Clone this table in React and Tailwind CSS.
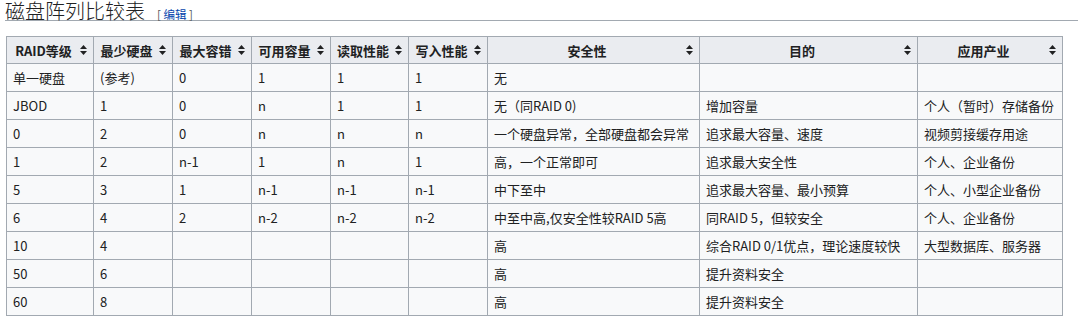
import React from 'react';

const columns = [
  { title: 'RAID等级', width: 'w-[87px]' },
  { title: '最少硬盘', width: 'w-[79px]' },
  { title: '最大容错', width: 'w-[79px]' },
  { title: '可用容量', width: 'w-[79px]' },
  { title: '读取性能', width: 'w-[78px]' },
  { title: '写入性能', width: 'w-[79px]' },
  { title: '安全性', width: 'w-[212px]' },
  { title: '目的', width: 'w-[218px]' },
  { title: '应用产业', width: 'w-[145px]' },
];

const rows = [
  ['单一硬盘', '(参考)', '0', '1', '1', '1', '无', '', ''],
  ['JBOD', '1', '0', 'n', '1', '1', '无（同RAID 0)', '增加容量', '个人（暂时）存储备份'],
  ['0', '2', '0', 'n', 'n', 'n', '一个硬盘异常，全部硬盘都会异常', '追求最大容量、速度', '视频剪接缓存用途'],
  ['1', '2', 'n-1', '1', 'n', '1', '高，一个正常即可', '追求最大安全性', '个人、企业备份'],
  ['5', '3', '1', 'n-1', 'n-1', 'n-1', '中下至中', '追求最大容量、最小预算', '个人、小型企业备份'],
  ['6', '4', '2', 'n-2', 'n-2', 'n-2', '中至中高,仅安全性较RAID 5高', '同RAID 5，但较安全', '个人、企业备份'],
  ['10', '4', '', '', '', '', '高', '综合RAID 0/1优点，理论速度较快', '大型数据库、服务器'],
  ['50', '6', '', '', '', '', '高', '提升资料安全', ''],
  ['60', '8', '', '', '', '', '高', '提升资料安全', ''],
];

function SortIcon() {
  return (
    <svg width="7" height="10" viewBox="0 0 7 10" className="shrink-0 ml-[6px]">
      <polygon points="0,4 3.5,0 7,4" fill="#202122" />
      <polygon points="0,6 3.5,10 7,6" fill="#202122" />
    </svg>
  );
}

export default function App() {
  return (
    <div className="w-[1080px] h-[333px] bg-white overflow-hidden pl-[5px] pr-[2px] font-['Noto_Sans_CJK_SC',sans-serif] text-[#202122]">
      <div className="flex items-baseline border-b border-[#a2a9b1] h-[23px] -mt-[2px]">
        <h2 className="text-[20px] leading-[25px] font-light text-[#202122]">磁盘阵列比较表</h2>
        <span className="ml-[12px] text-[11.5px] text-[#54595d]">
          [ <span className="text-[#0645ad]">编辑</span> ]
        </span>
      </div>

      <table className="mt-[15px] ml-[1px] table-fixed border-collapse text-[13px] leading-[21px] bg-[#f8f9fa]">
        <colgroup>
          {columns.map((c) => (
            <col key={c.title} className={c.width} />
          ))}
        </colgroup>
        <thead>
          <tr className="bg-[#eaecf0]">
            {columns.map((c) => (
              <th key={c.title} className="border border-[#a2a9b1] pl-[6px] pr-[6px] py-[2px] h-[27px] font-bold">
                <div className="flex items-center">
                  <span className="flex-1 text-center whitespace-nowrap">{c.title}</span>
                  <SortIcon />
                </div>
              </th>
            ))}
          </tr>
        </thead>
        <tbody>
          {rows.map((row, i) => (
            <tr key={i}>
              {row.map((cell, j) => (
                <td key={j} className="border border-[#a2a9b1] px-[6px] py-[3px] whitespace-nowrap h-[28px]">
                  {cell}
                </td>
              ))}
            </tr>
          ))}
        </tbody>
      </table>
    </div>
  );
}
